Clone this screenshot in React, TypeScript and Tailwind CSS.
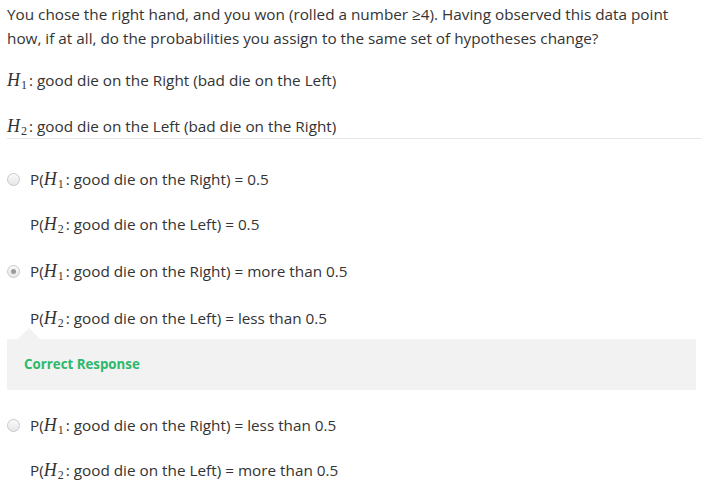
import React from 'react'

function H({ n }: { n: number }) {
  return (
    <span className="font-['Liberation_Serif',serif] italic text-[18px] leading-none">
      H<sub className="not-italic text-[12px] ml-[1px] mr-[2px]">{n}</sub>
    </span>
  )
}

function Radio({ checked }: { checked?: boolean }) {
  return (
    <span className="w-[13px] h-[13px] rounded-full border border-[#c9c9c9] bg-gradient-to-b from-[#fafafa] to-[#e6e6e6] flex items-center justify-center shrink-0">
      {checked && <span className="w-[5px] h-[5px] rounded-full bg-[#9a9a9a]" />}
    </span>
  )
}

function Line({ n, text, radio, checked }: { n: number; text: string; radio?: boolean; checked?: boolean }) {
  return (
    <div className="flex items-center h-6">
      <div className="w-[23px] flex items-center">{radio && <Radio checked={checked} />}</div>
      <span>
        P(<H n={n} />: {text}
      </span>
    </div>
  )
}

function Option({
  right,
  left,
  checked,
  className,
  inner,
}: {
  right: string
  left: string
  checked?: boolean
  className?: string
  inner: string
}) {
  return (
    <div className={className}>
      <Line n={1} text={`good die on the Right) = ${right}`} radio checked={checked} />
      <div className={inner}>
        <Line n={2} text={`good die on the Left) = ${left}`} />
      </div>
    </div>
  )
}

export default function App() {
  return (
    <div className="w-[701px] h-[495px] bg-white overflow-hidden font-['Open_Sans',sans-serif] text-[15.3px] text-[#333] pl-[7px]">
      <p className="pt-[2px] leading-6">
        You chose the right hand, and you won (rolled a number ≥4). Having observed this data point
        <br />
        how, if at all, do the probabilities you assign to the same set of hypotheses change?
      </p>

      <div className="mt-[18px] h-6 flex items-center">
        <span>
          <H n={1} />: good die on the Right (bad die on the Left)
        </span>
      </div>
      <div className="mt-[24px] h-[23px] flex items-center border-b border-[#e5e5e5] pb-[1px]">
        <span>
          <H n={2} />: good die on the Left (bad die on the Right)
        </span>
      </div>

      <Option className="mt-[28px]" inner="mt-[21px]" right="0.5" left="0.5" />
      <Option className="mt-[23px]" inner="mt-[23px]" right="more than 0.5" left="less than 0.5" checked />

      <div className="relative mt-[9px] mr-[5px] h-[51px] bg-[#f2f2f2] flex items-center pl-[17px]">
        <span className="absolute left-[11px] -top-[11px] w-0 h-0 border-l-[11px] border-r-[11px] border-b-[11px] border-l-transparent border-r-transparent border-b-[#f2f2f2]" />
        <span className="font-bold text-[13.3px] text-[#2db86b]">Correct Response</span>
      </div>

      <Option className="mt-[23px]" inner="mt-[21px]" right="less than 0.5" left="more than 0.5" />
    </div>
  )
}
